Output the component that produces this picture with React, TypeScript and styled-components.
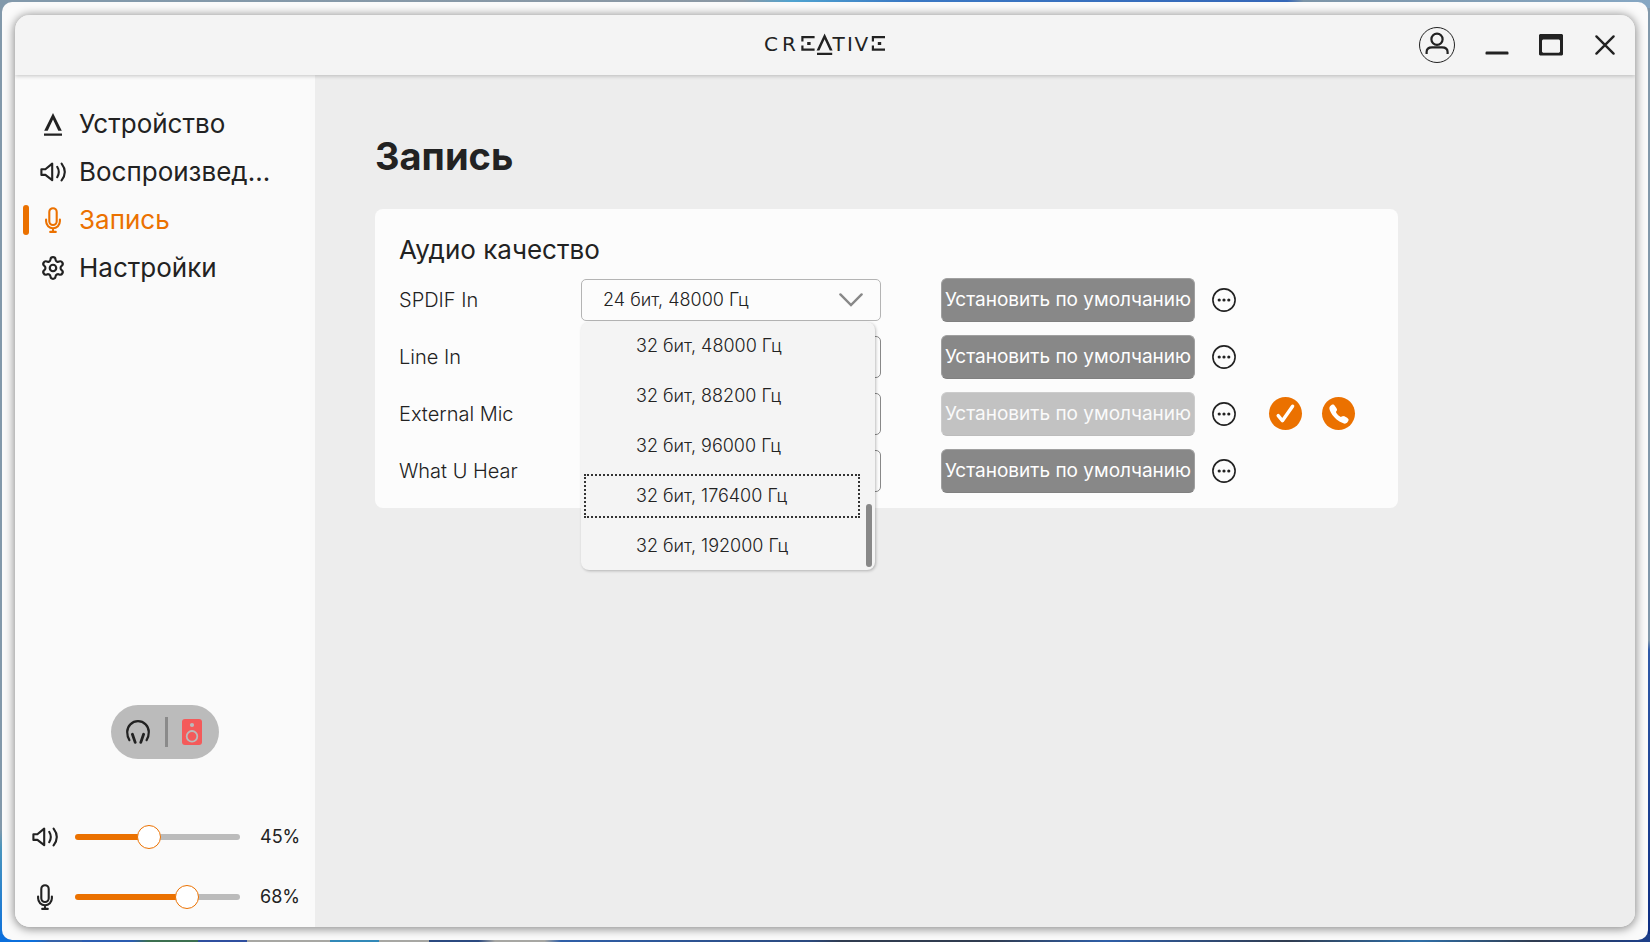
import React, { useId, useState } from 'react';
import styled, { createGlobalStyle, css } from 'styled-components';
import { Settings } from 'lucide-react';
import { IoCall } from 'react-icons/io5';

const ink = '#222222';
const accent = '#eb7100';

const GlobalStyle = createGlobalStyle`
  * { box-sizing: border-box; }
  body {
    margin: 0;
    color: ${ink};
    font-family: Inter, "Noto Sans", sans-serif;
    font-size: 18px;
    line-height: 24px;
  }
  button, select, input { font: inherit; color: inherit; }
`;

const Desktop = styled.div`
  display: flex;
  min-height: 100vh;
  padding: 2px;
  background:
    linear-gradient(90deg, #8299ab 0 7%, #8b98a4 45%, #4fa3d0 48%, #3a78c4 55%, #3567b8 78%, #7d95a8 79%, #86a7c3) top / 100% 8px no-repeat,
    linear-gradient(90deg, #0b6fdc 0 2%, #3561a8 3% 5%, #2b5cb0 5% 8%, #3c7050 9% 12%, #2f4f9f 12% 15%, #a7a7a3 15% 20%, #3189b8 20% 23%, #a7a7a3 23% 26%, #2b4a80 26% 29%, #a7a7a3 30% 33%, #2f5fa8 34%, #2b4a80 49%, #303c50 51% 60%, #2f5fa8 67%, #303c50 78%, #2f6fa8 86%, #303c50 93%, #1c3f8a) bottom / 100% 8px no-repeat,
    linear-gradient(180deg, #8299ab 0 68%, #2f5aa8 69%, #0c2c80) right / 50% 100% no-repeat,
    linear-gradient(180deg, #8299ab 0 88%, #4a95bd 90%, #0b6fdc);
`;

const Frame = styled.div`
  flex: 1;
  display: flex;
  padding: 13px;
  border-radius: 10px;
  background: #fafafa;
`;

const Window = styled.div`
  flex: 1;
  display: flex;
  flex-direction: column;
  min-width: 0;
  overflow: hidden;
  border-radius: 15px;
  background: #ededed;
`;

const Shadow = styled.div`
  flex: 1;
  display: flex;
  min-width: 0;
  border-radius: 15px;
  box-shadow: 0 1px 10px 1px rgba(0, 0, 0, 0.45);
`;

const TitleBar = styled.header`
  display: grid;
  grid-template-columns: 1fr auto 1fr;
  align-items: center;
  height: 60px;
  padding: 0 18px;
  background: #f4f4f4;
  box-shadow: 0 1px 4px rgba(0, 0, 0, 0.22);
  z-index: 1;
`;

const Wordmark = styled.svg`
  grid-column: 2;
  display: block;
`;

const WindowButtons = styled.div`
  display: flex;
  justify-content: flex-end;
  align-items: center;
  gap: 30px;
`;

const IconButton = styled.button`
  display: inline-flex;
  flex: none;
  padding: 0;
  border: 0;
  background: none;
  cursor: pointer;
`;

const Body = styled.div`
  flex: 1;
  display: flex;
`;

const Sidebar = styled.aside`
  flex: none;
  display: flex;
  flex-direction: column;
  width: 300px;
  padding-top: 25px;
  background: #fafafa;
`;

const NavItem = styled.a<{ $active?: boolean }>`
  display: flex;
  align-items: center;
  height: 48px;
  padding-right: 40px;
  color: ${p => (p.$active ? accent : ink)};
  font-size: 26px;
  line-height: 36px;
  text-decoration: none;

  &::before {
    content: '';
    width: 6px;
    height: 30px;
    margin: 0 8px;
    border-radius: 3px;
    background: ${p => (p.$active ? accent : 'transparent')};
  }
`;

const NavIcon = styled.span`
  display: flex;
  flex: none;
  justify-content: center;
  width: 32px;
  margin-right: 10px;
`;

const NavLabel = styled.span`
  overflow: hidden;
  text-overflow: ellipsis;
  white-space: nowrap;
`;

const OutputSwitch = styled.div`
  display: flex;
  align-items: center;
  justify-content: space-between;
  width: 108px;
  height: 54px;
  margin: auto 96px 48px;
  padding: 0 17px 0 15px;
  border-radius: 27px;
  background: #bbbbbb;
`;

const Divider = styled.span`
  width: 3px;
  height: 30px;
  background: #8a8a8a;
`;

const VolumeRow = styled.div`
  display: flex;
  align-items: center;
  height: 60px;
  padding-left: 14px;
`;

const VolumeIcon = styled.label`
  display: flex;
  justify-content: center;
  width: 32px;
  margin-right: 14px;
`;

const Slider = styled.span`
  display: grid;
  align-items: center;
  width: 165px;
  margin-right: 20px;

  > * { grid-area: 1 / 1; }
`;

const Rail = styled.span`
  height: 6px;
  border-radius: 3px;
`;

const Range = styled.input`
  appearance: none;
  width: 189px;
  height: 24px;
  margin: 0 -12px;
  background: none;

  &::-webkit-slider-thumb {
    appearance: none;
    width: 24px;
    height: 24px;
    border: 1px solid ${accent};
    border-radius: 50%;
    background: #ffffff;
  }
`;

const Main = styled.main`
  flex: 1;
  padding: 57px 60px;
`;

const PageTitle = styled.h1`
  margin: 0 0 29px;
  font-size: 38px;
  line-height: 48px;
  font-weight: 700;
`;

const Card = styled.section`
  max-width: 1023px;
  padding: 25px 24px 9px;
  border-radius: 8px;
  background: #fcfcfc;
`;

const CardTitle = styled.h2`
  margin: 0 0 5px;
  font-size: 26px;
  line-height: 32px;
  font-weight: 400;
`;

const DeviceRow = styled.div`
  display: flex;
  align-items: center;
  height: 57px;
`;

const DeviceName = styled.label`
  width: 182px;
  font-size: 20px;
  font-weight: 300;
`;

const SelectBox = styled.div`
  position: relative;
  display: grid;
  align-items: center;
  width: 300px;
  margin-right: 60px;
  font-weight: 300;

  > select, > svg { grid-area: 1 / 1; }
  > svg { justify-self: end; margin-right: 18px; pointer-events: none; }
`;

const Select = styled.select<{ $open?: boolean }>`
  appearance: none;
  width: 100%;
  height: 42px;
  padding: 0 48px 0 21px;
  border: 1px solid ${p => (p.$open ? '#b4b4b4' : '#888888')};
  border-radius: 5px;
  background: #fcfcfc;
`;

const Menu = styled.ul`
  position: absolute;
  top: 43px;
  left: 0;
  z-index: 2;
  display: grid;
  gap: 6px;
  width: 294px;
  margin: 0;
  padding: 2px 15px 2px 3px;
  border-radius: 8px;
  background: #f4f4f4;
  box-shadow: 1px 1px 3px rgba(0, 0, 0, 0.25);
  list-style: none;
`;

const MenuItem = styled.li<{ $focused?: boolean }>`
  padding: 8px 49px 8px 50px;
  border: 2px solid transparent;
  ${p => p.$focused && css`border: 2px dotted #333333;`}
`;

const ScrollThumb = styled.span`
  position: absolute;
  right: 3px;
  bottom: 3px;
  width: 6px;
  height: 63px;
  border-radius: 3px;
  background: #888888;
`;

const DefaultButton = styled.button`
  width: 254px;
  height: 44px;
  margin-right: 17px;
  padding: 0;
  border: 1px solid #a0a0a0;
  border-bottom-color: #808080;
  border-radius: 6px;
  background: #888888;
  color: #ffffff;
  font-size: 19px;
  white-space: nowrap;

  &:disabled {
    border-color: #cccccc;
    border-bottom-color: #bcbcbc;
    background: #c2c2c2;
    color: #fafafa;
  }
`;

const Badges = styled.div`
  display: flex;
  gap: 20px;
  margin-left: 33px;
`;

const Badge = styled.span`
  display: flex;
  align-items: center;
  justify-content: center;
  width: 33px;
  height: 33px;
  border-radius: 50%;
  background: ${accent};
  color: #ffffff;
`;

const SpeakerIcon = () => (
  <svg width="26" height="20" viewBox="0 0 26 20" fill="none" stroke="currentColor" strokeWidth="2.1" strokeLinecap="round" strokeLinejoin="round">
    <path d="M1.4 7.2H5.4L12.2 1.6V18.2L5.4 12.9H1.4Z" />
    <path d="M17.2 4.8Q20.4 10 17.2 15.2M21.6 1.6Q28 10 21.6 18.4" />
  </svg>
);

const MicIcon = () => (
  <svg width="16" height="26" viewBox="0 0 16 26" fill="none" stroke="currentColor" strokeWidth="2.1" strokeLinecap="round">
    <rect x="4.3" y="1.2" width="7.4" height="16.8" rx="3.7" />
    <path d="M1.1 12.5V14.3A6.9 6.9 0 0 0 14.9 14.3V12.5M8 21.5V24.8M5.2 24.9H10.8" />
  </svg>
);

const LambdaIcon = () => (
  <svg width="18" height="23" viewBox="0 0 18 23" fill="currentColor">
    <path d="M9 0L17.8 17.8H14.3L9 6.4L3.7 17.8H.2ZM0 20.6H18V22.8H0Z" />
  </svg>
);

const HeadphonesIcon = () => (
  <svg width="24" height="24" viewBox="0 0 24 24" fill="none" stroke={ink} strokeLinecap="round">
    <path d="M3.4 20.2C1.8 17.6 1.2 15 1.2 12A10.8 10.8 0 0 1 22.8 12C22.8 15 22.2 17.6 20.6 20.2" strokeWidth="2.2" />
    <path d="M6.4 14.2L9.2 22.4M17.6 14.2L14.8 22.4" strokeWidth="2.8" />
  </svg>
);

const LoudspeakerIcon = () => (
  <svg width="20" height="26" viewBox="0 0 20 26">
    <rect width="20" height="26" rx="3" fill="#f45a5a" />
    <circle cx="10" cy="6" r="2.1" fill="#bbbbbb" />
    <circle cx="10" cy="17.3" r="5.3" fill="none" stroke="#bbbbbb" strokeWidth="1.8" />
  </svg>
);

const ChevronIcon = () => (
  <svg width="24" height="14" viewBox="0 0 24 14" fill="none" stroke="#888888" strokeWidth="2.4" strokeLinecap="round">
    <path d="M1.4 1.4L12 12L22.6 1.4" />
  </svg>
);

const MoreIcon = () => (
  <svg width="24" height="24" viewBox="0 0 24 24" fill={ink}>
    <circle cx="12" cy="12" r="11.1" fill="none" stroke={ink} strokeWidth="1.6" />
    <circle cx="7.2" cy="12" r="1.6" />
    <circle cx="12" cy="12" r="1.6" />
    <circle cx="16.8" cy="12" r="1.6" />
  </svg>
);

const Logo = () => (
  <Wordmark width="122" height="24" viewBox="-1 -1 122 24" role="img" aria-label="Creative" fill={ink}>
    <g fontFamily="DejaVu Sans, sans-serif" fontSize="20">
      <text x="-1" y="16.6">C</text>
      <text x="17" y="16.6">R</text>
      <text x="67.5" y="16.6">T</text>
      <text x="82" y="16.6">I</text>
      <text x="89.5" y="16.6">V</text>
    </g>
    <g fill="none" stroke={ink} strokeWidth="2.2">
      <path d="M49.6 3.1H37.4V7.4M37.4 11.6V15.6H49.6" />
      <path d="M120 3.1H107.9V7.4M107.9 11.6V15.6H120" />
    </g>
    <path d="M42.2 8H45.6V11H42.2ZM112.8 8H116.2V11H112.8Z" />
    <path d="M59.6 -.5L67.6 16.6H64.8L59.6 5.2L54.4 16.6H51.6ZM52 18.8H67.2V21H52Z" />
  </Wordmark>
);

const navItems = [
  { label: 'Устройство', icon: <LambdaIcon /> },
  { label: 'Воспроизвед...', icon: <SpeakerIcon /> },
  { label: 'Запись', icon: <MicIcon />, active: true },
  { label: 'Настройки', icon: <Settings size={26} strokeWidth={2} /> },
];

const formats = ['32 бит, 48000 Гц', '32 бит, 88200 Гц', '32 бит, 96000 Гц', '32 бит, 176400 Гц', '32 бит, 192000 Гц'];

const devices = [
  { name: 'SPDIF In', open: true },
  { name: 'Line In' },
  { name: 'External Mic', isDefault: true },
  { name: 'What U Hear' },
];

function Volume({ name, icon, initial }: { name: string; icon: React.ReactNode; initial: number }) {
  const id = useId();
  const [value, setValue] = useState(initial);
  return (
    <VolumeRow>
      <VolumeIcon htmlFor={id} aria-label={name}>{icon}</VolumeIcon>
      <Slider>
        <Rail style={{ background: `linear-gradient(90deg, ${accent} ${value}%, #bbbbbb ${value}%)` }} />
        <Range id={id} type="range" min={0} max={100} value={value} onChange={e => setValue(Number(e.target.value))} />
      </Slider>
      <output htmlFor={id}>{value}%</output>
    </VolumeRow>
  );
}

function Device({ name, open, isDefault }: { name: string; open?: boolean; isDefault?: boolean }) {
  const id = useId();
  return (
    <DeviceRow>
      <DeviceName htmlFor={id}>{name}</DeviceName>
      <SelectBox>
        <Select id={id} $open={open}>
          <option>24 бит, 48000 Гц</option>
          {formats.map(f => <option key={f}>{f}</option>)}
        </Select>
        <ChevronIcon />
        {open && (
          <Menu role="listbox" aria-label={name}>
            {formats.map((f, i) => (
              <MenuItem key={f} role="option" aria-selected={i === 3} $focused={i === 3}>{f}</MenuItem>
            ))}
            <ScrollThumb />
          </Menu>
        )}
      </SelectBox>
      <DefaultButton disabled={isDefault}>Установить по умолчанию</DefaultButton>
      <IconButton aria-label="Ещё"><MoreIcon /></IconButton>
      {isDefault && (
        <Badges>
          <Badge>
            <svg width="33" height="33" viewBox="0 0 33 33" fill="none" stroke="currentColor" strokeWidth="3.4" strokeLinecap="round" strokeLinejoin="round">
              <path d="M9.2 18.6L13.4 23.8L23.6 9.2" />
            </svg>
          </Badge>
          <Badge><IoCall size={22} /></Badge>
        </Badges>
      )}
    </DeviceRow>
  );
}

export default function App() {
  return (
    <Desktop>
      <GlobalStyle />
      <Frame>
        <Shadow>
          <Window>
            <TitleBar>
              <Logo />
              <WindowButtons>
                <IconButton aria-label="Профиль">
                  <svg width="36" height="36" viewBox="0 0 36 36" fill="none" stroke={ink}>
                    <circle cx="18" cy="18" r="17.5" />
                    <circle cx="18" cy="12.2" r="5.6" strokeWidth="2.2" />
                    <path d="M7.6 27V25Q7.6 20.4 13 20.4H23Q28.6 20.4 28.6 25V27" strokeWidth="2.2" />
                  </svg>
                </IconButton>
                <IconButton aria-label="Свернуть">
                  <svg width="24" height="24" viewBox="0 0 24 24"><rect x=".5" y="18.6" width="23" height="3" rx="1.2" fill={ink} /></svg>
                </IconButton>
                <IconButton aria-label="Развернуть">
                  <svg width="24" height="24" viewBox="0 0 24 24"><path fill={ink} fillRule="evenodd" d="M1 1H23L24 2V21.6L23 22.6H1L0 21.6V2ZM3 7.6V18.8L4 19.8H20L21 18.8V7.6L20 6.6H4Z" /></svg>
                </IconButton>
                <IconButton aria-label="Закрыть">
                  <svg width="24" height="24" viewBox="-2 -2 24 24" stroke={ink} strokeWidth="2.4" strokeLinecap="round"><path d="M1.4 1.4L18.6 18.6M18.6 1.4L1.4 18.6" /></svg>
                </IconButton>
              </WindowButtons>
            </TitleBar>
            <Body>
              <Sidebar>
                <nav>
                  {navItems.map(n => (
                    <NavItem key={n.label} href="#" $active={n.active}>
                      <NavIcon>{n.icon}</NavIcon>
                      <NavLabel>{n.label}</NavLabel>
                    </NavItem>
                  ))}
                </nav>
                <OutputSwitch>
                  <IconButton aria-label="Наушники"><HeadphonesIcon /></IconButton>
                  <Divider />
                  <IconButton aria-label="Динамики"><LoudspeakerIcon /></IconButton>
                </OutputSwitch>
                <Volume name="Громкость" icon={<SpeakerIcon />} initial={45} />
                <Volume name="Микрофон" icon={<MicIcon />} initial={68} />
              </Sidebar>
              <Main>
                <PageTitle>Запись</PageTitle>
                <Card>
                  <CardTitle>Аудио качество</CardTitle>
                  {devices.map(d => <Device key={d.name} {...d} />)}
                </Card>
              </Main>
            </Body>
          </Window>
        </Shadow>
      </Frame>
    </Desktop>
  );
}
